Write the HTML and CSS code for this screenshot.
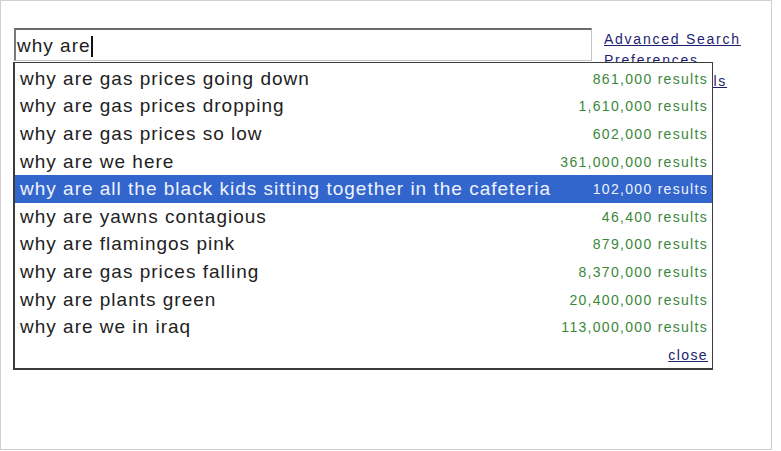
FILE: index.html
```html
<!DOCTYPE html>
<html>
  <head>
    <title>Google Suggest</title>
    <link rel="stylesheet" href="styles.css">
  </head>
  <body>
    <div class="frame">
      <div class="search-row">
        <div class="query">why are<span class="caret"></span></div>
        <div class="links">
          <a href="#">Advanced Search</a>
          <a href="#">Preferences</a>
          <a href="#">Language Tools</a>
        </div>
      </div>

      <div class="suggest">
        <div class="item"><span class="term">why are gas prices going down</span><span class="count">861,000 results</span></div>
        <div class="item"><span class="term">why are gas prices dropping</span><span class="count">1,610,000 results</span></div>
        <div class="item"><span class="term">why are gas prices so low</span><span class="count">602,000 results</span></div>
        <div class="item"><span class="term">why are we here</span><span class="count">361,000,000 results</span></div>
        <div class="item selected"><span class="term">why are all the black kids sitting together in the cafeteria</span><span class="count">102,000 results</span></div>
        <div class="item"><span class="term">why are yawns contagious</span><span class="count">46,400 results</span></div>
        <div class="item"><span class="term">why are flamingos pink</span><span class="count">879,000 results</span></div>
        <div class="item"><span class="term">why are gas prices falling</span><span class="count">8,370,000 results</span></div>
        <div class="item"><span class="term">why are plants green</span><span class="count">20,400,000 results</span></div>
        <div class="item"><span class="term">why are we in iraq</span><span class="count">113,000,000 results</span></div>
        <div class="close-row"><a href="#">close</a></div>
      </div>
    </div>
  </body>
</html>
```

FILE: styles.css
```css
body {
  margin: 0;
  background: #fff;
  font-family: "Liberation Sans", Arial, sans-serif;
  color: #222;
}
.frame {
  position: relative;
  width: 772px;
  height: 450px;
  box-sizing: border-box;
  border: 1px solid #cfcfcf;
}
.search-row {
  display: flex;
  padding: 27px 0 0 13px;
}
.query {
  width: 578px;
  height: 33px;
  box-sizing: border-box;
  border-top: 2px solid #6a6a6a;
  border-left: 2px solid #7a7a7a;
  border-right: 1px solid #c4c4c4;
  border-bottom: 1px solid #c4c4c4;
  padding: 3px 0 0 1px;
  font-size: 19px;
  letter-spacing: 1px;
  line-height: 26px;
}
.caret {
  display: inline-block;
  width: 2px;
  height: 21px;
  background: #111;
  vertical-align: -5px;
  margin-left: 0;
}
.links {
  display: flex;
  flex-direction: column;
  padding: 1px 0 0 12px;
  font-size: 14px;
  letter-spacing: 1.75px;
  line-height: 21px;
}
.links a {
  color: #1e1e70;
}
.suggest {
  position: absolute;
  left: 12px;
  top: 61px;
  width: 700px;
  height: 308px;
  box-sizing: border-box;
  border: 2px solid #3c3c3c;
  border-top-width: 1px;
  border-right-width: 1px;
  background: #fff;
  padding-top: 2px;
}
.item {
  display: flex;
  justify-content: space-between;
  align-items: center;
  height: 27.6px;
  padding: 0 4px 0 5px;
}
.term {
  font-size: 19px;
  letter-spacing: 1px;
  white-space: nowrap;
}
.count {
  font-size: 14px;
  letter-spacing: 1.3px;
  color: #3a873a;
  white-space: nowrap;
}
.selected {
  background: #3366cc;
}
.selected .term,
.selected .count {
  color: #eef2ff;
}
.close-row {
  text-align: right;
  padding: 6px 4px 0 0;
  font-size: 14px;
  letter-spacing: 1.4px;
}
.close-row a {
  color: #22226a;
}
```
